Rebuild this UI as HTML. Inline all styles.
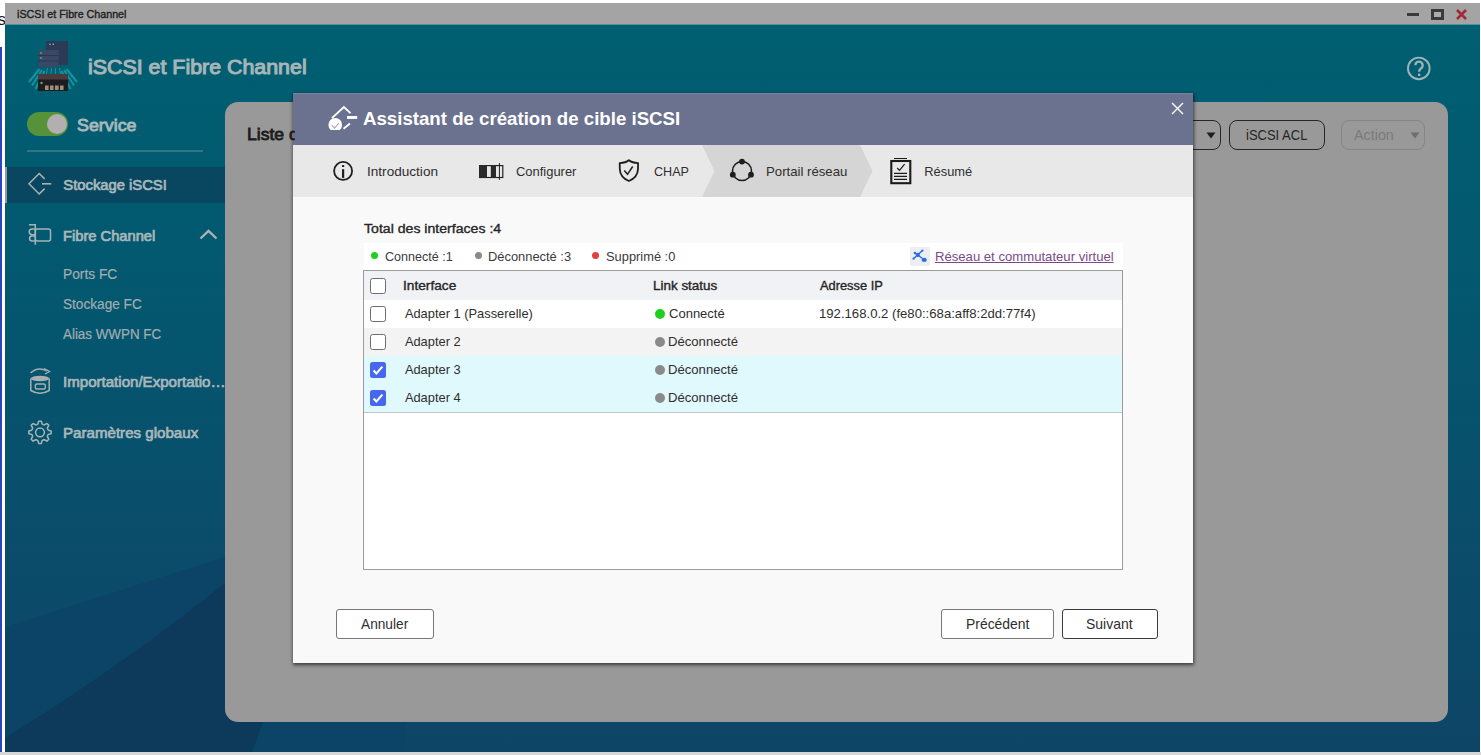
<!DOCTYPE html>
<html><head><meta charset="utf-8">
<style>
*{box-sizing:border-box;margin:0;padding:0}
html,body{width:1481px;height:755px;overflow:hidden;background:#fff;font-family:"Liberation Sans",sans-serif}
.a{position:absolute}
.t{position:absolute;white-space:nowrap;transform-origin:0 0}
svg{position:absolute;overflow:visible}
</style></head><body>
<!-- behind -->
<div class="a" style="left:0;top:47px;width:2px;height:705px;background:#2a44c4"></div>
<div class="a" style="left:0;top:752px;width:1481px;height:3px;background:#d6d6d6"></div>
<div class="t" style="left:-2.5px;top:11px;font-size:17px;line-height:17px;color:#1a1a1a">s</div>

<!-- title bar -->
<div class="a" style="left:5px;top:3px;width:1475px;height:21px;background:#a4a4a4"></div>
<div class="a" style="left:1407px;top:13px;width:12px;height:3px;background:#3a3a3a"></div>
<div class="a" style="left:1431px;top:9px;width:13px;height:11px;border:3px solid #3a3a3a;border-top-width:3px;background:#a9adb0"></div>
<svg style="left:1456px;top:9px" width="11" height="11" viewBox="0 0 11 11"><path d="M1 1L10 10M10 1L1 10" stroke="#a3283a" stroke-width="2.6"/></svg>

<!-- app background -->
<svg style="left:5px;top:24px" width="1475" height="728" viewBox="0 0 1475 728">
 <defs>
  <linearGradient id="g1" x1="0" y1="0" x2="0" y2="1">
   <stop offset="0" stop-color="#005f71"/>
   <stop offset="0.35" stop-color="#03586f"/>
   <stop offset="0.7" stop-color="#0a4d6b"/>
   <stop offset="1" stop-color="#0e4566"/>
  </linearGradient>
 </defs>
 <rect width="1475" height="728" fill="url(#g1)"/>
 <path d="M0 603 L220 533 L400 475 L400 728 L0 728Z" fill="#0b4466"/>
 <path d="M0 714 Q120 640 220 559 L330 500 L247 728 L0 728Z" fill="#0d395b"/>
 <rect x="0" y="0" width="1475" height="1" fill="#6aaab4" opacity="0.7"/>
</svg>

<!-- logo -->
<svg style="left:28px;top:41px" width="51" height="51" viewBox="0 0 51 51">
 <g stroke="#149ca6" stroke-width="1.4" fill="none" opacity="0.9">
  <path d="M11.5 28 L1 41 M14 29 L4 44.5 M16.5 30 L7.5 48" stroke-width="2"/>
  <path d="M38.5 28 L49 41 M36 29 L46 44.5 M33.5 30 L42.5 48" stroke-width="2"/>
  <path d="M19.5 27 L18.5 33 M23.5 27 L23 33 M27.5 27 L27.5 33 M31.5 27 L32.5 33" stroke-width="1.1"/>
 </g>
 <rect x="18" y="0" width="22" height="24" fill="#2c3a55"/>
 <rect x="10.5" y="9" width="20" height="17" fill="#3a4865"/>
 <path d="M10.5 14.5H30.5M10.5 20H30.5" stroke="#2a364e" stroke-width="1"/>
 <circle cx="13" cy="12" r="0.9" fill="#3bb86a"/><circle cx="13" cy="17" r="0.9" fill="#3bb86a"/>
 <circle cx="22" cy="3.3" r="0.8" fill="#8cc8d0"/><circle cx="25.3" cy="3.3" r="0.8" fill="#8cc8d0"/>
 <rect x="10" y="33" width="30" height="17" fill="#1e1c1e"/>
 <rect x="10" y="33" width="30" height="5.5" fill="#4a3c3e"/>
 <circle cx="13.5" cy="42" r="1.2" fill="#3bb86a"/>
 <rect x="17" y="44.5" width="3.6" height="4.5" fill="#a08e80"/><rect x="22" y="44.5" width="3.6" height="4.5" fill="#a08e80"/>
 <rect x="27" y="44.5" width="3.6" height="4.5" fill="#a08e80"/><rect x="32" y="44.5" width="3.6" height="4.5" fill="#a08e80"/>
</svg>

<!-- help -->
<svg style="left:1405px;top:54px" width="28" height="28" viewBox="0 0 28 28">
 <circle cx="13.8" cy="14.4" r="10.8" fill="none" stroke="#9db4b8" stroke-width="1.9"/>
 <path d="M10.3 11.3 A3.7 3.7 0 1 1 15.9 14.5 Q14.1 15.5 14.1 17.8" fill="none" stroke="#9db4b8" stroke-width="2.3"/>
 <rect x="12.95" y="19.6" width="2.35" height="2.4" fill="#9db4b8"/>
</svg>

<!-- toggle -->
<div class="a" style="left:27px;top:112px;width:41px;height:24px;border-radius:12px;background:#56923a"></div>
<div class="a" style="left:47px;top:114px;width:20px;height:20px;border-radius:10px;background:#b2afb0"></div>
<div class="a" style="left:27px;top:150px;width:176px;height:2px;background:#2f7487"></div>

<!-- selected nav -->
<div class="a" style="left:5px;top:167px;width:220px;height:36px;background:#08475f"></div>
<div class="a" style="left:5px;top:167px;width:2px;height:36px;background:#8c9ea4"></div>

<!-- nav icons -->
<svg style="left:28px;top:173px" width="24" height="22" viewBox="0 0 24 22">
 <path d="M16.6 5.9 L11.2 0.5 L1 10.8 L11.2 21 L16.6 15.6" fill="none" stroke="#a9b3b3" stroke-width="1.5"/>
 <path d="M14 10.8 H23.2" stroke="#a9b3b3" stroke-width="1.6"/>
</svg>
<svg style="left:28px;top:223px" width="24" height="23" viewBox="0 0 24 23">
 <g fill="none" stroke="#a7b4b6" stroke-width="1.5">
  <path d="M1 1.8 H7.3 V21.8"/>
  <rect x="7.3" y="5.9" width="15.2" height="12.1" rx="2"/>
  <path d="M7.3 5.9 H4.2 A3 2.9 0 0 0 4.2 11.7 H7.3"/>
  <path d="M7.3 12.9 H4.2 A2.6 2.55 0 0 0 4.2 18 H7.3"/>
 </g>
</svg>
<svg style="left:199px;top:229px" width="19" height="11" viewBox="0 0 19 11">
 <path d="M1.5 9.5 L9.5 1.8 L17.5 9.5" fill="none" stroke="#a9b3b3" stroke-width="2.4"/>
</svg>
<svg style="left:29px;top:367px" width="22" height="28" viewBox="0 0 22 28">
 <path d="M1.5 6 Q9 -1 18 4" fill="none" stroke="#a7b0b0" stroke-width="1.4"/>
 <path d="M15 1.5 L20.5 4.5 L16 7" fill="none" stroke="#a7b0b0" stroke-width="1.4"/>
 <ellipse cx="11" cy="11.5" rx="9.2" ry="2.8" fill="#a7b0b0"/>
 <path d="M1.8 11.5 V23.5 Q11 29 20.2 23.5 V11.5" fill="none" stroke="#a7b0b0" stroke-width="1.5"/>
 <rect x="6.3" y="17" width="10" height="5" rx="1.5" fill="none" stroke="#a7b0b0" stroke-width="1.4"/>
</svg>
<svg style="left:27px;top:419px" width="26" height="26" viewBox="0 0 26 26">
 <path fill="none" stroke="#a7b4b6" stroke-width="1.5" stroke-linejoin="round" d="M9.82 5.63 L10.92 4.96 L11.64 2.18 L14.36 2.18 L15.08 4.96 L16.18 5.63 L17.43 5.93 L19.90 4.47 L21.83 6.40 L20.37 8.87 L20.67 10.12 L21.34 11.22 L24.12 11.94 L24.12 14.66 L21.34 15.38 L20.67 16.48 L20.37 17.73 L21.83 20.20 L19.90 22.13 L17.43 20.67 L16.18 20.97 L15.08 21.64 L14.36 24.42 L11.64 24.42 L10.92 21.64 L9.82 20.97 L8.57 20.67 L6.10 22.13 L4.17 20.20 L5.63 17.73 L5.33 16.48 L4.66 15.38 L1.88 14.66 L1.88 11.94 L4.66 11.22 L5.33 10.12 L5.63 8.87 L4.17 6.40 L6.10 4.47 L8.57 5.93 Z"/>
 <circle cx="13" cy="13.3" r="4.4" fill="none" stroke="#a7b4b6" stroke-width="1.5"/>
</svg>

<!-- panel -->
<div class="a" style="left:225px;top:102px;width:1223px;height:620px;border-radius:13px;background:#999999"></div>
<div class="a" style="left:1120px;top:120px;width:101px;height:30px;border:1.3px solid #262626;border-radius:8px"></div>
<svg style="left:1206px;top:132px" width="10" height="7" viewBox="0 0 10 7"><path d="M0.5 0.5H9.5L5 6.5Z" fill="#1e1e1e"/></svg>
<div class="a" style="left:1229px;top:120px;width:96px;height:30px;border:1.3px solid #262626;border-radius:8px"></div>
<div class="a" style="left:1341px;top:120px;width:84px;height:30px;border:1px solid #858585;border-radius:8px"></div>
<svg style="left:1410px;top:132px" width="10" height="7" viewBox="0 0 10 7"><path d="M0.5 0.5H9.5L5 6.5Z" fill="#6e6e6e"/></svg>

<!-- modal -->
<div class="a" style="left:293px;top:93px;width:900px;height:570px;background:#f9f9f9;box-shadow:0.5px 1.5px 3.5px 0.5px rgba(0,0,0,.62)"></div>
<div class="a" style="left:293px;top:93px;width:900px;height:52px;background:#6b7290"></div>
<div class="a" style="left:293px;top:93px;width:900px;height:1px;background:#7385a0"></div>
<div class="a" style="left:293px;top:145px;width:900px;height:52px;background:#e8e8e8"></div>
<svg style="left:702px;top:145px" width="172" height="52" viewBox="0 0 172 52"><path d="M0 0H158L170.5 26L158 52H0L12.5 26Z" fill="#d5d5d5"/></svg>
<svg style="left:1171px;top:102px" width="13" height="13" viewBox="0 0 13 13"><path d="M1 1L12 12M12 1L1 12" stroke="#fff" stroke-width="1.4"/></svg>
<!-- modal title icon -->
<svg style="left:326px;top:104px" width="34" height="28" viewBox="0 0 34 28">
 <path d="M5.9 14.1 L17.9 3 L24.5 9.1" fill="none" stroke="#fff" stroke-width="1.9"/>
 <path d="M17.5 24.8 L24 19.4" fill="none" stroke="#fff" stroke-width="1.9"/>
 <rect x="21" y="12" width="10.2" height="2.9" fill="#fff"/>
 <path d="M4.73 26 A6.85 6.85 0 1 1 13.77 26 Z" fill="#fff"/>
 <path d="M5.8 21.2 L8.6 24.2 L12.8 19" fill="none" stroke="#a4a9bd" stroke-width="1.1"/>
</svg>
<!-- step icons -->
<svg style="left:332px;top:160px" width="22" height="22" viewBox="0 0 22 22">
 <circle cx="11.1" cy="10.9" r="9" fill="none" stroke="#1e1e1e" stroke-width="1.8"/>
 <rect x="10" y="9.2" width="2.2" height="8.7" fill="#1e1e1e"/>
 <rect x="10" y="5.1" width="2.2" height="1.9" fill="#1e1e1e"/>
</svg>
<svg style="left:478px;top:162px" width="26" height="19" viewBox="0 0 26 19">
 <rect x="1.6" y="3.6" width="23.2" height="11.9" fill="none" stroke="#222" stroke-width="1.2"/>
 <rect x="1" y="3" width="8" height="13" fill="#2a2a2a"/>
 <rect x="12.8" y="3" width="5.2" height="13" fill="#2a2a2a"/>
 <path d="M21.4 1 V18" stroke="#222" stroke-width="1"/>
</svg>
<svg style="left:617px;top:158px" width="24" height="25" viewBox="0 0 24 25">
 <path d="M11.9 2.3 Q8.8 4.9 2.7 5.1 L2.8 11 C3 17 7 21 11.9 23 C16.8 21 20.8 17 21 11 L21.1 5.1 Q15 4.9 11.9 2.3Z" fill="none" stroke="#1e1e1e" stroke-width="1.8" stroke-linejoin="round"/>
 <path d="M7.3 12.5 L10.5 16.3 L15.7 8.5" fill="none" stroke="#1e1e1e" stroke-width="1.5"/>
</svg>
<svg style="left:728px;top:157px" width="28" height="27" viewBox="0 0 28 27">
 <circle cx="14" cy="14" r="9.5" fill="none" stroke="#1e1e1e" stroke-width="1.6"/>
 <circle cx="14" cy="4.6" r="2.9" fill="#1e1e1e"/>
 <circle cx="4.8" cy="17.7" r="2.9" fill="#1e1e1e"/>
 <circle cx="23" cy="17.7" r="2.9" fill="#1e1e1e"/>
</svg>
<svg style="left:888px;top:156px" width="25" height="29" viewBox="0 0 25 29">
 <rect x="3.3" y="5" width="19" height="22.2" fill="none" stroke="#1a1a1a" stroke-width="2.1"/>
 <path d="M6 2.5H19 M6 17.4H19 M6 20.4H19 M6 23.4H19" stroke="#1a1a1a" stroke-width="1.1"/>
 <path d="M9.2 12 L11.5 14.4 L16.6 8.1" fill="none" stroke="#1a1a1a" stroke-width="1.2"/>
</svg>

<!-- legend bar -->
<div class="a" style="left:364px;top:243px;width:759px;height:27px;background:#fff"></div>
<div class="a" style="left:370.8px;top:251.7px;width:7.6px;height:7.6px;border-radius:4px;background:#1ed01e"></div>
<div class="a" style="left:474.8px;top:251.7px;width:7.6px;height:7.6px;border-radius:4px;background:#8a8a8a"></div>
<div class="a" style="left:591.8px;top:251.7px;width:7.6px;height:7.6px;border-radius:4px;background:#e04040"></div>
<div class="a" style="left:910px;top:246.5px;width:19.5px;height:19.5px;background:#eceef4;border-radius:2px"></div>
<svg style="left:910px;top:247px" width="20" height="19" viewBox="0 0 20 19">
 <path d="M12.5 3.5 L3.5 11.7 M4.9 6 L14.2 12.8" stroke="#2a6ee0" stroke-width="1.4"/>
 <circle cx="12.5" cy="3.5" r="1.1" fill="#2a6ee0"/>
 <circle cx="3.5" cy="11.7" r="1.1" fill="#2a6ee0"/>
 <circle cx="4.9" cy="6" r="1.3" fill="#2a6ee0"/>
 <circle cx="7.8" cy="7.9" r="2.1" fill="#2a6ee0"/>
 <ellipse cx="14.2" cy="12.9" rx="2.6" ry="2.1" fill="#2a6ee0"/>
</svg>

<!-- table -->
<div class="a" style="left:363px;top:270px;width:760px;height:300px;border:1px solid #9c9c9c;background:#fff"></div>
<div class="a" style="left:364px;top:271px;width:758px;height:29px;background:#f1f2f5"></div>
<div class="a" style="left:364px;top:328px;width:758px;height:28px;background:#f3f3f3"></div>
<div class="a" style="left:364px;top:356px;width:758px;height:56px;background:#e0f9fc"></div>
<div class="a" style="left:364px;top:412px;width:758px;height:1px;background:#c4c4c4"></div>

<div class="a" style="left:370px;top:278px;width:16px;height:16px;border:1.3px solid #6e6e6e;border-radius:2.5px;background:#fff"></div>
<div class="a" style="left:370px;top:306px;width:16px;height:16px;border:1.3px solid #6e6e6e;border-radius:2.5px;background:#fff"></div>
<div class="a" style="left:370px;top:334px;width:16px;height:16px;border:1.3px solid #6e6e6e;border-radius:2.5px;background:#fff"></div>
<svg style="left:370px;top:362px" width="16" height="16" viewBox="0 0 16 16"><rect width="16" height="16" rx="2.5" fill="#4668ee"/><path d="M3.6 8.5 L6.4 11.4 L12.4 4.6" fill="none" stroke="#fff" stroke-width="2.1"/></svg>
<svg style="left:370px;top:390px" width="16" height="16" viewBox="0 0 16 16"><rect width="16" height="16" rx="2.5" fill="#4668ee"/><path d="M3.6 8.5 L6.4 11.4 L12.4 4.6" fill="none" stroke="#fff" stroke-width="2.1"/></svg>

<div class="a" style="left:655px;top:308.5px;width:10px;height:10px;border-radius:5px;background:#1ed01e"></div>
<div class="a" style="left:655px;top:336.5px;width:10px;height:10px;border-radius:5px;background:#8a8a8a"></div>
<div class="a" style="left:655px;top:364.5px;width:10px;height:10px;border-radius:5px;background:#8a8a8a"></div>
<div class="a" style="left:655px;top:392.5px;width:10px;height:10px;border-radius:5px;background:#8a8a8a"></div>

<!-- buttons -->
<div class="a" style="left:336px;top:609px;width:98px;height:30px;border:1px solid #777;border-radius:3px;background:#fff"></div>
<div class="a" style="left:941px;top:609px;width:113px;height:30px;border:1px solid #777;border-radius:3px;background:#fff"></div>
<div class="a" style="left:1062px;top:609px;width:96px;height:30px;border:1px solid #3a3a3a;border-radius:3px;background:#fff"></div>

<div class="t" style="left:17.06px;top:7.80px;font-size:11.69px;line-height:11.69px;color:#1e1e1e;-webkit-text-stroke:0.4px #1e1e1e;transform:scaleX(0.9155);">iSCSI et Fibre Channel</div>
<div class="t" style="left:88.12px;top:57.58px;font-size:19.86px;line-height:19.86px;color:#a8b5b8;-webkit-text-stroke:1.0px #a8b5b8;transform:scaleX(1.0765);">iSCSI et Fibre Channel</div>
<div class="t" style="left:77.21px;top:117.62px;font-size:16.60px;line-height:16.60px;color:#a9b8bb;-webkit-text-stroke:0.85px #a9b8bb;transform:scaleX(1.0751);">Service</div>
<div class="t" style="left:63.36px;top:177.94px;font-size:14.77px;line-height:14.77px;color:#aab8bb;-webkit-text-stroke:0.7px #aab8bb;">Stockage iSCSI</div>
<div class="t" style="left:62.97px;top:229.23px;font-size:14.20px;line-height:14.20px;color:#a9b7ba;-webkit-text-stroke:0.7px #a9b7ba;transform:scaleX(1.0358);">Fibre Channel</div>
<div class="t" style="left:63.40px;top:266.88px;font-size:14.20px;line-height:14.20px;color:#a0adb0;-webkit-text-stroke:0.2px #a0adb0;transform:scaleX(0.9702);">Ports FC</div>
<div class="t" style="left:63.15px;top:297.18px;font-size:14.20px;line-height:14.20px;color:#a0adb0;-webkit-text-stroke:0.2px #a0adb0;transform:scaleX(0.9598);">Stockage FC</div>
<div class="t" style="left:62.70px;top:326.78px;font-size:14.20px;line-height:14.20px;color:#a0adb0;-webkit-text-stroke:0.2px #a0adb0;transform:scaleX(0.9434);">Alias WWPN FC</div>
<div class="t" style="left:62.59px;top:375.34px;font-size:14.77px;line-height:14.77px;color:#a9b7ba;-webkit-text-stroke:0.7px #a9b7ba;transform:scaleX(1.0210);">Importation/Exportatio…</div>
<div class="t" style="left:62.74px;top:426.24px;font-size:14.77px;line-height:14.77px;color:#a9b7ba;-webkit-text-stroke:0.7px #a9b7ba;transform:scaleX(1.0232);">Paramètres globaux</div>
<div class="t" style="left:246.69px;top:126.65px;font-size:16.94px;line-height:16.94px;color:#1c1c1c;-webkit-text-stroke:0.8px #1c1c1c;transform:scaleX(1.0380);width:46.4px;overflow:hidden;">Liste d</div>
<div class="t" style="left:1245.82px;top:129.07px;font-size:13.86px;line-height:13.86px;color:#262626;transform:scaleX(0.9380);">iSCSI ACL</div>
<div class="t" style="left:1354.30px;top:129.07px;font-size:13.86px;line-height:13.86px;color:#7a7a7a;transform:scaleX(1.0335);">Action</div>
<div class="t" style="left:363.13px;top:108.99px;font-size:19.14px;line-height:19.14px;color:#ffffff;font-weight:700;transform:scaleX(0.9752);">Assistant de création de cible iSCSI</div>
<div class="t" style="left:367.38px;top:165.71px;font-size:12.86px;line-height:12.86px;color:#2e2e2e;transform:scaleX(1.0565);">Introduction</div>
<div class="t" style="left:515.95px;top:165.71px;font-size:12.86px;line-height:12.86px;color:#2e2e2e;transform:scaleX(1.0064);">Configurer</div>
<div class="t" style="left:654.17px;top:165.71px;font-size:12.86px;line-height:12.86px;color:#2e2e2e;transform:scaleX(0.9775);">CHAP</div>
<div class="t" style="left:766.25px;top:165.71px;font-size:12.86px;line-height:12.86px;color:#2e2e2e;transform:scaleX(1.0252);">Portail réseau</div>
<div class="t" style="left:924.27px;top:165.71px;font-size:12.86px;line-height:12.86px;color:#2e2e2e;">Résumé</div>
<div class="t" style="left:364.49px;top:222.39px;font-size:13.03px;line-height:13.03px;color:#262626;-webkit-text-stroke:0.35px #262626;transform:scaleX(1.0834);">Total des interfaces :4</div>
<div class="t" style="left:384.97px;top:250.75px;font-size:12.57px;line-height:12.57px;color:#3a3a3a;">Connecté :1</div>
<div class="t" style="left:487.97px;top:250.75px;font-size:12.57px;line-height:12.57px;color:#3a3a3a;transform:scaleX(1.0250);">Déconnecté :3</div>
<div class="t" style="left:605.99px;top:250.75px;font-size:12.57px;line-height:12.57px;color:#3a3a3a;transform:scaleX(1.0236);">Supprimé :0</div>
<div class="t" style="left:934.95px;top:250.37px;font-size:13.14px;line-height:13.14px;color:#7b4a8c;text-decoration:underline;">Réseau et commutateur virtuel</div>
<div class="t" style="left:403.44px;top:280.22px;font-size:12.17px;line-height:12.17px;color:#262626;-webkit-text-stroke:0.35px #262626;transform:scaleX(1.1271);">Interface</div>
<div class="t" style="left:653.40px;top:280.22px;font-size:12.17px;line-height:12.17px;color:#262626;-webkit-text-stroke:0.35px #262626;transform:scaleX(1.1057);">Link status</div>
<div class="t" style="left:820.17px;top:280.22px;font-size:12.17px;line-height:12.17px;color:#262626;-webkit-text-stroke:0.35px #262626;transform:scaleX(1.0558);">Adresse IP</div>
<div class="t" style="left:404.90px;top:307.81px;font-size:12.86px;line-height:12.86px;color:#2e2e2e;">Adapter 1 (Passerelle)</div>
<div class="t" style="left:668.65px;top:307.81px;font-size:12.86px;line-height:12.86px;color:#2e2e2e;transform:scaleX(1.0124);">Connecté</div>
<div class="t" style="left:819.28px;top:307.81px;font-size:12.86px;line-height:12.86px;color:#2e2e2e;transform:scaleX(1.0214);">192.168.0.2 (fe80::68a:aff8:2dd:77f4)</div>
<div class="t" style="left:404.90px;top:335.81px;font-size:12.86px;line-height:12.86px;color:#2e2e2e;">Adapter 2</div>
<div class="t" style="left:668.25px;top:335.81px;font-size:12.86px;line-height:12.86px;color:#2e2e2e;transform:scaleX(1.0190);">Déconnecté</div>
<div class="t" style="left:404.90px;top:363.81px;font-size:12.86px;line-height:12.86px;color:#2e2e2e;">Adapter 3</div>
<div class="t" style="left:668.25px;top:363.81px;font-size:12.86px;line-height:12.86px;color:#2e2e2e;transform:scaleX(1.0190);">Déconnecté</div>
<div class="t" style="left:404.90px;top:391.81px;font-size:12.86px;line-height:12.86px;color:#2e2e2e;">Adapter 4</div>
<div class="t" style="left:668.25px;top:391.81px;font-size:12.86px;line-height:12.86px;color:#2e2e2e;transform:scaleX(1.0190);">Déconnecté</div>
<div class="t" style="left:361.40px;top:617.87px;font-size:13.86px;line-height:13.86px;color:#2e2e2e;transform:scaleX(0.9878);">Annuler</div>
<div class="t" style="left:965.79px;top:617.87px;font-size:13.86px;line-height:13.86px;color:#2e2e2e;transform:scaleX(1.0034);">Précédent</div>
<div class="t" style="left:1086.44px;top:617.87px;font-size:13.86px;line-height:13.86px;color:#2e2e2e;transform:scaleX(1.0067);">Suivant</div>

</body></html>
